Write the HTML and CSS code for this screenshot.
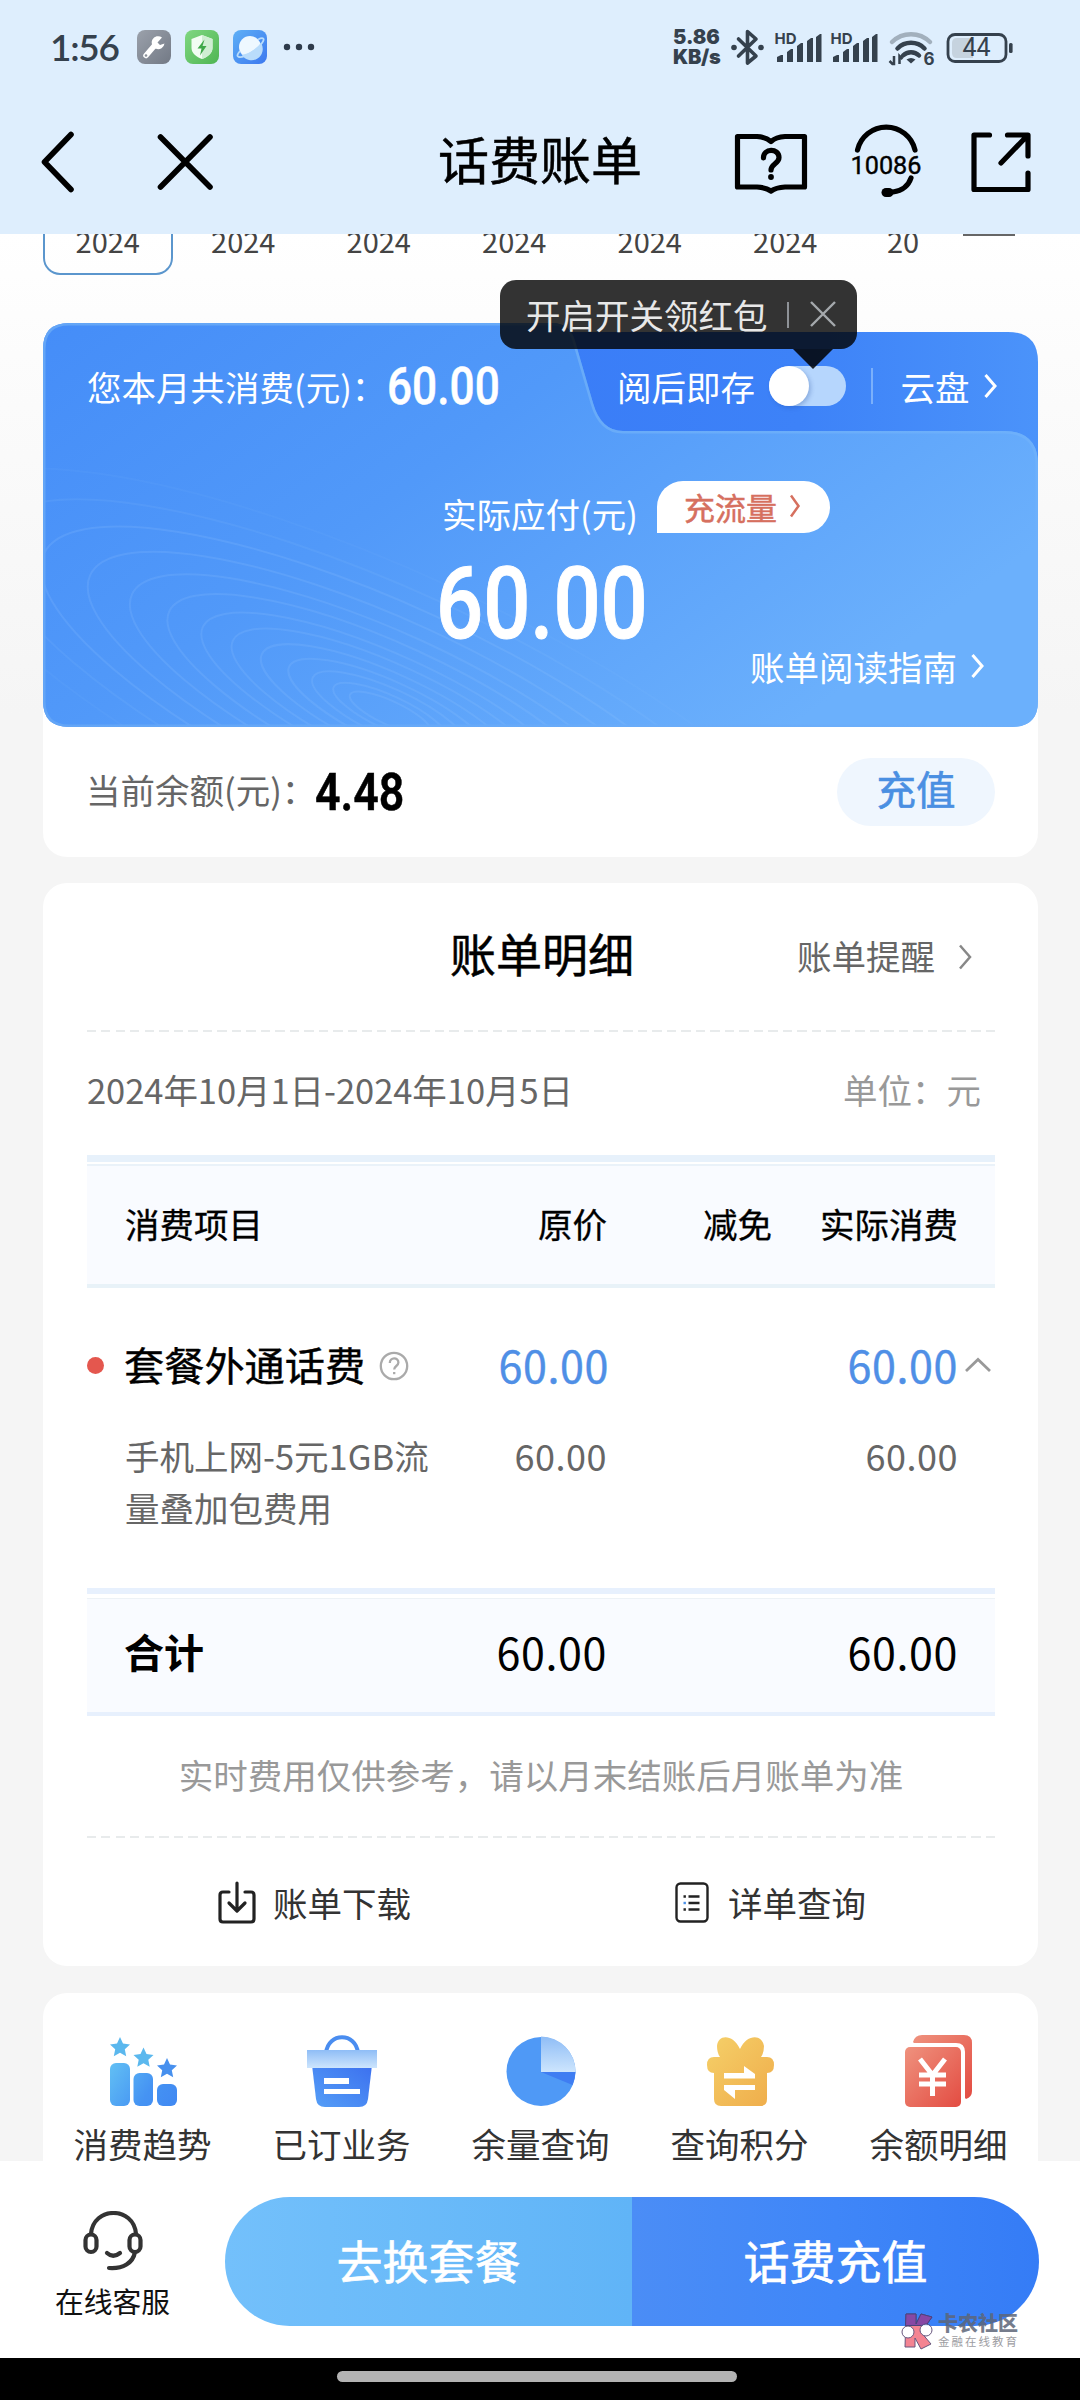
FILE: index.html
```html
<!DOCTYPE html>
<html lang="zh-CN">
<head>
<meta charset="utf-8">
<title>话费账单</title>
<link rel="stylesheet" href="styles.css">
</head>
<body>
<div class="phone">
  <header class="top">
    <div class="status">
      <span class="clock">1:56</span>
      <svg class="apps" width="178" height="34" viewBox="0 0 178 34">
        <defs>
          <linearGradient id="gy" x1="0" y1="0" x2="1" y2="1"><stop offset="0" stop-color="#9ba1ab"/><stop offset="1" stop-color="#727985"/></linearGradient>
          <linearGradient id="gn" x1="0" y1="0" x2="1" y2="1"><stop offset="0" stop-color="#80d781"/><stop offset="1" stop-color="#4fb553"/></linearGradient>
          <linearGradient id="bl" x1="0" y1="0" x2="1" y2="1"><stop offset="0" stop-color="#5eb0f6"/><stop offset="1" stop-color="#3c78ef"/></linearGradient>
        </defs>
        <rect width="34" height="34" rx="8" fill="url(#gy)"/>
        <path d="M9 25.500 18 15" stroke="#fff" stroke-width="5.500" stroke-linecap="round"/>
        <path d="M25 7.500a6.500 6.500 0 1 0 2.500 6l-4.500 1.500-2.500-2.500z" fill="#fff"/>
        <circle cx="9" cy="25.500" r="1.300" fill="#8a909a"/>
        <rect x="48" width="34" height="34" rx="8" fill="url(#gn)"/>
        <path d="M65 5 75.500 9v9c0 5.500-5 9-10.500 11-5.500-2-10.500-5.500-10.500-11V9z" fill="#f2fdf2"/>
        <path d="M65 5 75.500 9v9c0 5.500-5 9-10.500 11z" fill="#cfeed2"/>
        <path d="M67.500 9.500 60.500 18.500h4l-1.500 7 6.500-9.500h-4z" fill="#3ea848"/>
        <rect x="96" width="34" height="34" rx="8" fill="url(#bl)"/>
        <circle cx="113" cy="17" r="11" fill="#eef8ff"/>
        <path d="M101 25c8 .5 20-6 23-12a11 11 0 0 1-19 12z" fill="#b9dcfb"/>
        <path d="M121 9.500c5-2.500 7.500-1.500 4 3.500-5 7-18 15-23 14-3-.5-1-3.500 1-6" fill="none" stroke="#b9dcfb" stroke-width="1.800"/>
        <g fill="#2e3b4b"><circle cx="150" cy="17" r="3.200"/><circle cx="162" cy="17" r="3.200"/><circle cx="174" cy="17" r="3.200"/></g>
      </svg>
      <div class="speed"><b>5.86</b><b>KB/s</b></div>
      <svg class="signals" width="284" height="40" viewBox="730 26 284 40" fill="#35414d">
        <path d="M738.500 38 756 55 747.500 62V30.500L756 38 738.500 55" fill="none" stroke="#35414d" stroke-width="3.600" stroke-linejoin="round" stroke-linecap="round"/>
        <circle cx="734" cy="46.500" r="2.800"/><circle cx="761" cy="46.500" r="2.800"/>
        <text x="774.500" y="43" class="hd" textLength="22" lengthAdjust="spacingAndGlyphs">HD</text>
        <path d="M777 61v-5l4-2h2v7zM787 61V51l4-3h2v13zM797 61V45l4-3h2v19zM807 61V40l4-3h2v24zM816 61V36l4-3h1.500v28z"/>
        <text x="830.500" y="43" class="hd" textLength="22" lengthAdjust="spacingAndGlyphs">HD</text>
        <path d="M833 61v-5l4-2h2v7zM843 61V51l4-3h2v13zM853 61V45l4-3h2v19zM863 61V40l4-3h2v24zM872 61V36l4-3h1.500v28z"/>
        <g fill="none" stroke-width="4.500" stroke-linecap="round">
          <path d="M892 41a27 27 0 0 1 38 0" stroke="#a2b0bd"/>
          <path d="M897.500 47.500a19 19 0 0 1 27 0M903 54.500a11.500 11.500 0 0 1 16 0" stroke="#35414d"/>
        </g>
        <path d="M911 62.500l-4.500-4q4.500-3 9 0z"/>
        <path d="M894 55v8h-1.500l-3-3M899.500 63v-8l3 3" fill="none" stroke="#35414d" stroke-width="2.500"/>
        <text x="923.500" y="63.500" class="hd six">6</text>
        <rect x="948" y="33.500" width="58" height="27" rx="7" fill="none" stroke="#35414d" stroke-width="2.800"/>
        <path d="M957 37h16v20h-16q-5 0-5-5V42q0-5 5-5z" fill="#c6d3df"/>
        <rect x="1009" y="42" width="3.600" height="10" rx="1.500"/>
        <text x="976.500" y="55" text-anchor="middle" class="batt">44</text>
      </svg>
    </div>
    <nav class="titlebar">
      <svg width="180" height="66" viewBox="38 129 180 66" fill="none" stroke="#000" stroke-width="5.600" stroke-linecap="round" stroke-linejoin="round"><path d="M71 134.500 44.500 162 71 189.500M160.500 137l49.500 50M210 137l-49.500 50"/></svg>
      <h1>话费账单</h1>
      <svg class="tools" width="300" height="80" viewBox="733 122 300 80" fill="none" stroke="#000" stroke-width="5.200" stroke-linecap="round" stroke-linejoin="round">
        <path d="M737.500 136.500H757q9 .5 14 5 5-4.500 14-5h19.500v50.500H785q-9 .5-14 4-5-3.500-14-4h-19.500z"/>
        <path d="M763.500 158c-.5-10 15.500-10 15.500-.5 0 6-8 6.500-8 12.500" /><circle cx="771" cy="177" r="2.900" fill="#000" stroke="none"/>
        <path d="M857.500 150a29.500 29.500 0 0 1 57.500 0M911 178q-4 12-18 14"/>
        <rect x="881.500" y="188" width="12" height="9" rx="4.500" fill="#000" stroke="none"/>
        <text x="850.500" y="173.500" class="svc" textLength="71" lengthAdjust="spacingAndGlyphs">10086</text>
        <path d="M989.500 135H974v54.500h54V173M1007.500 135H1028v21M1027 136l-26 27"/>
      </svg>
    </nav>
  </header>

  <main class="content">
    <div class="months">
      <span class="month on">2024</span><span class="month">2024</span><span class="month">2024</span><span class="month">2024</span><span class="month">2024</span><span class="month">2024</span><span class="month cut">20</span>
      <span class="more"></span>
    </div>

    <section class="summary">
      <div class="hero">
        <svg class="hero-bg" width="995" height="404" viewBox="43 323 995 404">
          <defs>
            <linearGradient id="hb" x1="0" y1="0" x2="1" y2=".55"><stop offset="0" stop-color="#458df8"/><stop offset=".45" stop-color="#5199f9"/><stop offset="1" stop-color="#6bb0fc"/></linearGradient>
            <linearGradient id="ht" x1="0" y1="0" x2="1" y2="0"><stop offset="0" stop-color="#3a7df7"/><stop offset=".5" stop-color="#3d82f8"/><stop offset="1" stop-color="#4b93fa"/></linearGradient>
            <linearGradient id="he" x1="0" y1="0" x2="1" y2="0"><stop offset="0" stop-color="#63a5f6"/><stop offset="1" stop-color="#6db0fb"/></linearGradient>
            <clipPath id="hc"><path d="M43 349q0-26 26-26H552q18 0 23 18l18 62q8 28 30 28h381q34 0 34 34V701q0 26-26 26H69q-26 0-26-26z"/></clipPath>
          </defs>
          <path d="M560 332h448q30 0 30 30v160H560z" fill="url(#ht)"/>
          <g clip-path="url(#hc)">
            <path d="M43 323h995v404H43z" fill="url(#hb)"/>
            <g transform="translate(390 713) rotate(24.700)" fill="none" stroke="#9ccbff" stroke-opacity=".17" stroke-width="2">
              <ellipse rx="44" ry="12"/><ellipse rx="62" ry="17"/><ellipse rx="85" ry="24"/><ellipse rx="111" ry="31"/><ellipse rx="141" ry="39"/><ellipse rx="173" ry="48"/><ellipse rx="206" ry="57"/><ellipse rx="243" ry="68"/><ellipse rx="284" ry="79"/><ellipse rx="330" ry="92"/><ellipse rx="381" ry="107"/><ellipse rx="437" ry="122" stroke-opacity=".1"/><ellipse rx="500" ry="140" stroke-opacity=".06"/>
            </g>
            <path d="M43 349q0-26 26-26H552q18 0 23 18l18 62q8 28 30 28h381q34 0 34 34V701q0 26-26 26H69q-26 0-26-26z" fill="none" stroke="url(#he)" stroke-width="5"/>
          </g>
        </svg>
        <div class="hero-row first">
          <span>您本月共消费(元)：</span><strong class="din spent">60.00</strong>
          <span class="keep">阅后即存</span><i class="switch"></i><i class="bar"></i><span>云盘</span>
          <svg class="chev" width="15" height="28" viewBox="0 0 15 28"><path d="M2.500 3l9.500 11-9.500 11"/></svg>
        </div>
        <div class="hero-row due"><span>实际应付(元)</span>
          <a class="pill">充流量<svg width="12" height="26" viewBox="0 0 12 26"><path d="M2 2.500l7.500 10.500L2 23.500"/></svg></a>
        </div>
        <div class="hero-row total"><strong class="din">60.00</strong></div>
        <div class="hero-row guide"><span>账单阅读指南</span><svg class="chev" width="15" height="28" viewBox="0 0 15 28"><path d="M2.500 3l9.500 11-9.500 11"/></svg></div>
        <div class="tip">开启开关领红包<i></i><svg width="28" height="28" viewBox="0 0 28 28"><path d="M2 2l24 24M26 2 2 26"/></svg></div>
      </div>
      <div class="balance"><span>当前余额(元)：</span><strong class="din left">4.48</strong><a class="recharge">充值</a></div>
    </section>

    <section class="card detail">
      <div class="head"><h2>账单明细</h2><a>账单提醒<svg width="15" height="28" viewBox="0 0 15 28"><path d="M2 2.500 12 14 2 25.500"/></svg></a></div>
      <div class="dash"></div>
      <div class="period"><span>2024年10月1日-2024年10月5日</span><em>单位：元</em></div>
      <div class="table-head"><span>消费项目</span><span>原价</span><span>减免</span><span>实际消费</span></div>
      <div class="row main-row">
        <span class="name">套餐外通话费<svg width="30" height="30" viewBox="0 0 30 30"><circle cx="15" cy="15" r="13.200"/><path d="M10.800 12c0-6 8.600-6 8.600-.5 0 3.500-4.200 3.500-4.200 7"/><path d="M15.200 21v2.200"/></svg></span>
        <span>60.00</span><span></span><span>60.00</span>
        <svg class="caret" width="28" height="16" viewBox="0 0 28 16"><path d="M2 14 14 2.500 26 14"/></svg>
      </div>
      <div class="row sub-row"><span class="name">手机上网-5元1GB流量叠加包费用</span><span>60.00</span><span></span><span>60.00</span></div>
      <div class="sum"><b>合计</b><span>60.00</span><span></span><span>60.00</span></div>
      <p class="note">实时费用仅供参考，请以月末结账后月账单为准</p>
      <div class="dash"></div>
      <div class="actions">
        <a><svg width="40" height="44" viewBox="0 0 40 44" fill="none" stroke="#222" stroke-width="3.200" stroke-linecap="round" stroke-linejoin="round"><path d="M12 11H6q-3 0-3 3v24q0 3 3 3h28q3 0 3-3V14q0-3-3-3h-6M20 2v27M12 22l8 8 8-8"/></svg>账单下载</a>
        <a><svg width="34" height="42" viewBox="0 0 34 42" fill="none" stroke="#222" stroke-width="2.400"><rect x="1.500" y="1.500" width="31" height="38" rx="4"/><path d="M13.500 14.500h11M13.500 21h11M13.500 27.500h11M8.500 14.500h2.400M8.500 27.500h2.400"/><path d="M8.500 21h2.400" stroke="#4a90e8"/></svg>详单查询</a>
      </div>
    </section>

    <section class="card grid">
      <svg width="0" height="0" class="defs"><defs>
        <linearGradient id="i2" x1="0" y1="0" x2="0" y2="1"><stop offset="0" stop-color="#8fbdf6"/><stop offset="1" stop-color="#cde5fd"/></linearGradient>
        <linearGradient id="i3" x1="0" y1="1" x2="1" y2="0"><stop offset="0" stop-color="#559ff7"/><stop offset="1" stop-color="#3c70ef"/></linearGradient>
        <linearGradient id="i4" x1="0" y1="0" x2="1" y2="1"><stop offset="0" stop-color="#f5d069"/><stop offset="1" stop-color="#efac4a"/></linearGradient>
        <linearGradient id="i5" x1="0" y1="0" x2="1" y2="1"><stop offset="0" stop-color="#ef927e"/><stop offset="1" stop-color="#e34c42"/></linearGradient>
        <linearGradient id="i6" gradientUnits="userSpaceOnUse" x1="3" y1="28" x2="70" y2="71"><stop offset="0" stop-color="#62c0f4"/><stop offset=".6" stop-color="#4593f3"/><stop offset="1" stop-color="#4088f2"/></linearGradient>
      </defs></svg>
      <a><svg width="72" height="72" viewBox="0 0 72 72"><g fill="url(#i6)"><rect x="3" y="28" width="20" height="43" rx="6"/><rect x="26.500" y="38" width="19.500" height="33" rx="6"/><rect x="50" y="49" width="20" height="22" rx="6"/></g>
        <path id="star" d="M13 2l3 6.500 7 .9-5.200 4.800 1.400 7L13 17.700l-6.200 3.500 1.400-7L3 9.400l7-.9z" fill="#5bb8ee"/><use href="#star" x="23.500" y="10.500"/><path d="M60 23l3 6.500 7 .9-5.200 4.800 1.400 7-6.200-3.500-6.200 3.500 1.400-7-5.200-4.800 7-.9z" fill="#4790ee"/></svg>消费趋势</a>
      <a><svg width="72" height="72" viewBox="0 0 72 72"><path d="M20 18C22-3 50-3 52 18" fill="none" stroke="#4a8df0" stroke-width="4"/><path d="M6 30h60l-4 34q-1 8-9 8H19q-8 0-9-8z" fill="url(#i3)"/><path d="M1 15h70v18H1z" fill="url(#i2)"/><path d="M18 43h25v6H18zM18 54h36v5H18z" fill="#fff"/></svg>已订业务</a>
      <a><svg width="72" height="72" viewBox="0 0 72 72"><circle cx="36" cy="36.500" r="34.500" fill="#4f99f6"/><path d="M36 37h34.500q-.5 7-3 13z" fill="#3f7df2"/><path d="M36 37V1.500A35 35 0 0 1 70.500 37z" fill="url(#i2)"/></svg>余量查询</a>
      <a><svg width="72" height="72" viewBox="0 0 72 72"><path d="M36 14C29-1 14-1 13 11q0 7 3 11H10q-7 0-7 8t7 8v26q0 7 7 7h39q7 0 7-7V38q7 0 7-8t-7-8h-6q3-4 3-11C58-1 43-1 36 14z" fill="url(#i4)"/><path d="M20 38h20v-7l11 8v4.500H20zM51 50v5H31v9l-11-9v-5z" fill="#fff"/></svg>查询积分</a>
      <a><svg width="72" height="72" viewBox="0 0 72 72"><path d="M10 7q2-7 9-7h42q8 0 8 8v48q0 6-6 8z" fill="url(#i5)"/><path d="M0 8h53q9 0 9 9v55H0z" fill="#fff"/><rect x="2" y="12" width="56" height="60" rx="5" fill="url(#i5)"/><path d="M17 24l12.500 16L42 24M16 40h27M16 49h27M29.500 40v21" fill="none" stroke="#fff" stroke-width="5"/></svg>余额明细</a>
    </section>
  </main>

  <footer class="footer">
    <a class="service"><svg width="60" height="60" viewBox="0 0 60 60" fill="none" stroke="#333" stroke-width="4.200" stroke-linecap="round"><path d="M8 23C10-5 51-5 53 23"/><rect x="2.500" y="23.500" width="11" height="17.500" rx="5.500"/><rect x="46.500" y="23.500" width="11" height="17.500" rx="5.500"/><path d="M52 41c-2 11-12 17-26 16M24 42q6 5.500 13 0"/></svg>在线客服</a>
    <div class="buttons"><a>去换套餐</a><a>话费充值</a></div>
    <div class="mark">
      <svg width="34" height="38" viewBox="0 0 34 38" stroke="#4e3a68" stroke-width="1"><path d="M6 2h10v10l5-10 11 3-8 11-4 3 11 13-10 5-6-11v9H5z" fill="#f36f80"/><path d="M6 2h10v10l5-10 11 3-6 8.500H5.500z" fill="#953e96"/><circle cx="8" cy="20" r="6" fill="#fff"/><circle cx="26" cy="18" r="6" fill="#fff"/></svg>
      <div><b>卡农社区</b><small>金融在线教育</small></div>
    </div>
  </footer>
  <div class="homebar"><i></i></div>
</div>
</body>
</html>
```
FILE: styles.css
```css
* { box-sizing: border-box; }
body { margin: 0; font-family: "Noto Sans CJK SC", sans-serif; color: #333; font-size: 34.500px; }
h1, h2, p { margin: 0; font-weight: 400; }
svg { display: block; flex: none; }
.phone { width: 1080px; height: 2400px; display: flex; flex-direction: column; overflow: hidden; background: #f5f5f5; }

.top { height: 234px; flex: none; background: #deeefd; position: relative; z-index: 2; }
.status { height: 94px; display: flex; align-items: center; padding-left: 50px; color: #35414d; }
.clock { width: 87px; font: 600 37px/40px Lato, sans-serif; letter-spacing: -1.300px; }
.speed { margin-left: 358px; display: flex; flex-direction: column; width: 57px; font: 700 20px/20px Inter, sans-serif; }
.speed b:last-child { letter-spacing: -.3px; }
.hd { font: 700 15px Inter, sans-serif; }
.six { font-size: 17px; }
.batt { font: 400 25px Roboto, sans-serif; }
.svc { font: 400 26.500px Roboto, sans-serif; fill: #000; stroke: #000; stroke-width: .4px; }
.titlebar { height: 136px; display: flex; align-items: center; padding-left: 38px; color: #000; }
.titlebar h1 { margin: -9px 0 0 220px; font-size: 51px; line-height: 60px; -webkit-text-stroke: .5px; }
.tools { margin-left: 91px; }

.content { flex: 1; min-height: 0; overflow: hidden; background: linear-gradient(#fff 0, #fcfcfc 120px, #f5f5f5 480px); }
.months { height: 41px; display: flex; padding-left: 43px; gap: 6px; color: #444; }
.month { width: 129.500px; height: 41px; text-align: center; font-size: 29px; line-height: 12px; flex: none; }
.on { border: 2px solid #5b96cd; border-top: 0; border-radius: 0 0 17px 17px; }
.cut { width: 83px; text-align: left; padding-left: 31px; }
.more { width: 52px; height: 1.500px; background: #666; margin-left: 18px; }

.summary { margin: 48px 42px 0 43px; height: 534px; background: linear-gradient(transparent 300px, #fff 300px); border-radius: 0 0 24px 24px; }
.hero { height: 404px; position: relative; color: #fff; }
.hero-bg { position: absolute; inset: 0; }
.hero-row { position: relative; display: flex; align-items: center; white-space: nowrap; }
.first { height: 126px; padding-left: 44px; }
.chev path, .pill path { fill: none; stroke: #fff; stroke-width: 3; }
.din { font-family: Roboto, sans-serif; font-weight: 500; transform-origin: 0 50%; color: #fff; -webkit-text-stroke: .5px; }
.spent { font-size: 52px; transform: scaleX(.85); width: 230px; margin-left: -4px; }
.first > span:first-child { width: 304px; }
.switch { width: 77px; height: 40px; border-radius: 20px; background: #b6d6fd; margin-left: 14px; flex: none; }
.switch::before { content: ""; display: block; width: 40px; height: 40px; border-radius: 50%; background: #fff; box-shadow: 2px 2px 4px rgba(40,80,160,.3); }
.bar { width: 1.500px; height: 36px; background: #7bb0fb; margin: 0 28px 0 25px; }
.first .chev { margin-left: 13px; }
.due { height: 94px; padding: 38px 0 0 399px; align-items: flex-start; line-height: 52px; margin-top: -6px; }
.due span { width: 215px; line-height: 50px; margin-top: 7px; }
.pill { display: flex; align-items: center; height: 52px; width: 173px; padding-left: 27px; background: #fff; border-radius: 26px 26px 26px 0; color: #d6705f; font-size: 31px; line-height: 44px; -webkit-text-stroke: .5px; }
.pill svg { margin: -3px 0 0 12px; }
.pill path { stroke: #d6705f; stroke-width: 2.500; }
.total { height: 98px; padding-left: 393px; margin-top: 18px; }
.total .din { font-size: 100px; transform: scaleX(.83); line-height: 98px; -webkit-text-stroke: 1px; }
.guide { height: 28px; margin-top: -1px; padding-left: 707px; }
.guide .chev { margin-left: 13px; }
.tip { position: absolute; left: 457px; top: -43px; width: 357px; height: 69px; border-radius: 16px; background: rgba(0,0,0,.8); color: #e8e8e8; display: flex; align-items: center; padding: 0 0 2px 26px; line-height: 60px; white-space: nowrap; }
.tip i { width: 2px; height: 26px; background: #8e9297; margin: 2px 20px 0 19px; }
.tip path { stroke: #a5a9ad; stroke-width: 2.400; }
.tip::after { content: ""; position: absolute; left: 293px; top: 69px; border: 20px solid transparent; border-top-color: rgba(0,0,0,.85); border-bottom: 0; }
.balance { height: 130px; display: flex; align-items: center; padding: 0 43px 0 43px; color: #666; }
.balance span { width: 229px; white-space: nowrap; margin-top: -6px; }
.balance .left { color: #000; font-size: 52px; transform: scaleX(.86); font-weight: 600; }
.recharge { margin-left: auto; margin-top: -1px; width: 158px; height: 68px; border-radius: 34px; background: #eff6fe; color: #4a8fe2; font-size: 39.500px; line-height: 60px; text-align: center; -webkit-text-stroke: .6px; }

.card { background: #fff; border-radius: 24px; margin: 26px 42px 0 43px; }
.detail { height: 1083px; padding: 0 43px 0 44px; }
.head { height: 147px; display: flex; align-items: center; color: #000; }
.head h2 { font-size: 46px; margin-left: 363px; line-height: 60px; margin-top: -9px; -webkit-text-stroke: .5px; }
.head a { display: flex; align-items: center; margin: -3px 0 0 163px; color: #666; }
.head a svg { margin: 4px 0 0 23px; }
.head a path { fill: none; stroke: #888; stroke-width: 2.500; }
.dash { height: 2px; background: repeating-linear-gradient(90deg, #e8ebec 0 9px, transparent 9px 14.500px); }
.period { height: 123px; display: flex; align-items: center; justify-content: space-between; color: #666; padding: 0 14px 10px 0; }
.period span { letter-spacing: -.05px; }
.period em { font-style: normal; color: #999; }
.table-head, .row, .sum { display: grid; grid-template-columns: 363px 157px 165px 186px; text-align: right; }
.table-head { height: 133px; color: #000; line-height: 136px; border-bottom: 4px solid #e8f2f8; background: linear-gradient(#e7f1fb 7px, #fff 7px 9px, #eaf2f9 9px 11px, #f9fbff 11px); -webkit-text-stroke: .3px; }
.table-head span:first-child, .sum b { text-align: left; padding-left: 38px; }
.row { position: relative; }
.main-row { height: 156px; line-height: 152px; font-size: 43px; color: #4f8fe6; letter-spacing: .6px; }
.main-row > span { -webkit-text-stroke: .4px; }
.main-row .name { font-size: 40.200px; color: #000; text-align: left; display: flex; align-items: center; white-space: nowrap; letter-spacing: 0; line-height: 148px; height: 152px; }
.main-row .name::before { content: ""; width: 17px; height: 17px; border-radius: 50%; background: #e4574e; margin: 2px 20px 0 0; }
.name svg { margin: 4px 0 0 14px; fill: none; stroke: #aaa; stroke-width: 2.300; }
.main-row > span:nth-child(2) { margin-right: -2px; }
.caret { position: absolute; left: 877px; top: 69px; fill: none; stroke: #999; stroke-width: 2.800; }
.sub-row { height: 148px; color: #666; font-size: 36px; line-height: 52px; margin-top: -14px; letter-spacing: .5px; }
.sub-row .name { text-align: left; padding: 0 0 0 38px; font-size: 34.500px; width: 350px; letter-spacing: 0; margin-top: -1px; }
.sub-row > span:not(.name) { margin-top: -1px; }
.sum { height: 128px; margin-top: 10px; line-height: 126px; color: #000; font-size: 43px; letter-spacing: .6px; border-bottom: 4px solid #e7f0fd; background: linear-gradient(#e7f0fd 6px, #fff 6px 10px, #edf2f6 10px 11px, #f9fbff 11px); }
.sum b { font-size: 40px; letter-spacing: 0; padding-left: 37px; }
.note { height: 120px; line-height: 116px; color: #999; text-align: center; white-space: nowrap; }
.actions { height: 128px; display: grid; grid-template-columns: 458px 1fr; }
.actions a { display: flex; align-items: center; padding-left: 130px; }
.actions svg { margin-right: 16px; margin-top: 2px; }
.actions a:last-child svg { margin-right: 19px; }

.grid { height: 300px; display: grid; grid-template-columns: repeat(5, 199px); padding-top: 42px; position: relative; margin-top: 27px; }
.grid a { display: flex; flex-direction: column; align-items: center; line-height: 50px; gap: 11px; }
.defs { position: absolute; }

.footer { height: 197px; flex: none; background: #fff; display: flex; position: relative; }
.service { width: 225px; display: flex; flex-direction: column; align-items: center; padding-top: 50px; gap: 9px; font-size: 28.800px; line-height: 42px; color: #111; }
.buttons { display: flex; width: 814px; height: 129px; margin-top: 36px; border-radius: 65px; overflow: hidden; color: #fff; font-size: 46px; line-height: 124px; text-align: center; -webkit-text-stroke: .6px; }
.buttons a { flex: 1; background: linear-gradient(90deg, #73c0fb, #60b4f7); }
.buttons a + a { background: linear-gradient(90deg, #4b8df6, #3f86f8 50%, #357cf6); }
.mark { position: absolute; left: 900px; top: 151px; display: flex; gap: 4px; opacity: .85; color: #5d6678; }
.mark div { display: flex; flex-direction: column; }
.mark b { font-size: 20px; line-height: 22px; font-weight: 900; }
.mark small { font-size: 11.500px; line-height: 14px; letter-spacing: 2px; color: #8d8d92; }
.homebar { height: 42px; flex: none; background: #000; padding-top: 13px; }
.homebar i { display: block; width: 400px; height: 11px; border-radius: 6px; background: #b3b3b3; margin-left: 337px; }
```
